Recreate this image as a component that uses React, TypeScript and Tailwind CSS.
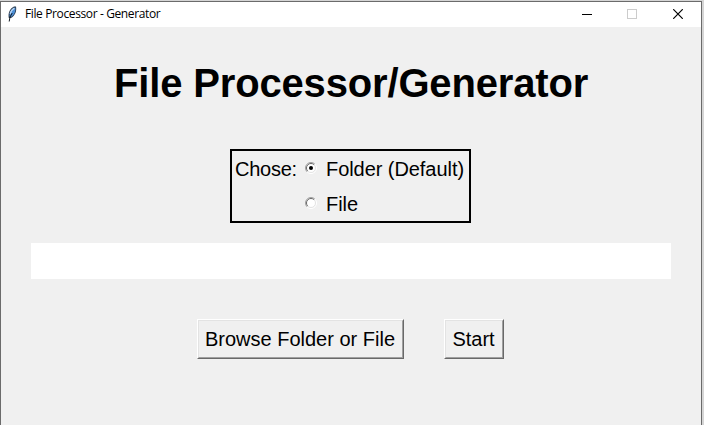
import React from "react";

function FeatherIcon() {
  return (
    <svg width="10" height="16" viewBox="0 0 10 16" className="shrink-0">
      <path d="M1.8 12 C0.8 8 2.5 2.6 7 0.6 L9 0.6 C9.8 5 8.4 9.5 4 12 Z" fill="#2b3b4e" />
      <path d="M2.6 10.6 C2.2 6.5 4.5 2.6 8.3 1.4 C8.8 5 7.4 9 3.8 11 Z" fill="#4c8fd6" />
      <path d="M3.2 8 C3.8 5.2 5.2 3.4 7.4 2.2" stroke="#b4d4f5" strokeWidth="1.4" fill="none" />
      <path d="M2.2 15.5 L3 11 L5.2 7" stroke="#101820" strokeWidth="1" fill="none" />
    </svg>
  );
}

function TitleBar() {
  return (
    <header className="flex h-[25px] items-center bg-white pb-[2px] pl-[6px] pr-[18px]">
      <FeatherIcon />
      <span className="ml-2 mt-px whitespace-nowrap font-['Open_Sans','Noto_Sans',sans-serif] text-[12px] leading-none tracking-[-0.38px]">
        File Processor - Generator
      </span>
      <div className="ml-auto flex items-center">
        <svg width="10" height="10" shapeRendering="crispEdges" className="mr-[35px]">
          <path d="M0 5.5H10" stroke="#000" />
        </svg>
        <svg width="10" height="10" shapeRendering="crispEdges" className="mr-9">
          <rect x="0.5" y="0.5" width="9" height="9" fill="none" stroke="#ccc" />
        </svg>
        <svg width="10" height="10">
          <path d="M0.2 0.2L9.8 9.8M9.8 0.2L0.2 9.8" stroke="#000" strokeWidth="1.2" />
        </svg>
      </div>
    </header>
  );
}

function Radio({ label, checked }: { label: string; checked?: boolean }) {
  return (
    <label className="flex h-[35px] items-center">
      <svg width="12" height="12" viewBox="0 0 12 12" className="mr-[9px] -mt-[2px] shrink-0">
        <circle cx="6" cy="6" r="5" fill="#fff" />
        <path d="M2.1 9.9A5.5 5.5 0 0 1 9.9 2.1" fill="none" stroke="#a0a0a0" />
        <path d="M2.8 9.2A4.5 4.5 0 0 1 9.2 2.8" fill="none" stroke="#696969" />
        <path d="M9.9 2.1A5.5 5.5 0 0 1 2.1 9.9" fill="none" stroke="#fff" />
        <path d="M9.2 2.8A4.5 4.5 0 0 1 2.8 9.2" fill="none" stroke="#e3e3e3" />
        {checked && <circle cx="6" cy="6" r="2" fill="#000" />}
      </svg>
      <span className="whitespace-nowrap tracking-[-0.06px]">{label}</span>
    </label>
  );
}

function PushButton({ label, width }: { label: string; width: string }) {
  return (
    <button
      className={`${width} h-10 whitespace-nowrap border border-t-white border-l-white border-r-[#696969] border-b-[#696969] bg-[#f0f0f0] leading-none`}
    >
      <span className="flex h-full items-center justify-center border border-t-[#e3e3e3] border-l-[#e3e3e3] border-r-[#a0a0a0] border-b-[#a0a0a0] pr-px">
        {label}
      </span>
    </button>
  );
}

export default function App() {
  return (
    <div className="h-[425px] w-[704px] overflow-hidden bg-[#d5d5d5] pt-px font-['Liberation_Sans',Arial,sans-serif] text-[20px] text-black">
      <div className="h-[424px] w-[702px] border-t border-r border-l border-[#6b6b6b] bg-[#f0f0f0]">
        <TitleBar />
        <main className="flex flex-col pt-8">
          <h1 className="ml-[113px] h-12 whitespace-nowrap text-[40px] font-bold leading-[48px] tracking-[-0.16px]">
            File Processor/Generator
          </h1>
          <section className="ml-[229px] mt-[42px] flex h-[74px] w-[241px] border-2 border-black pl-[3px]">
            <span className="h-[35px] w-[70px] whitespace-nowrap pt-px leading-[35px] tracking-[-0.25px]">Chose:</span>
            <div>
              <Radio label="Folder (Default)" checked />
              <Radio label="File" />
            </div>
          </section>
          <input className="ml-[30px] mt-5 h-9 w-[640px] bg-white outline-none" />
          <div className="ml-[196px] mt-10 flex gap-10">
            <PushButton label="Browse Folder or File" width="w-[207px]" />
            <PushButton label="Start" width="w-[60px]" />
          </div>
        </main>
      </div>
    </div>
  );
}
